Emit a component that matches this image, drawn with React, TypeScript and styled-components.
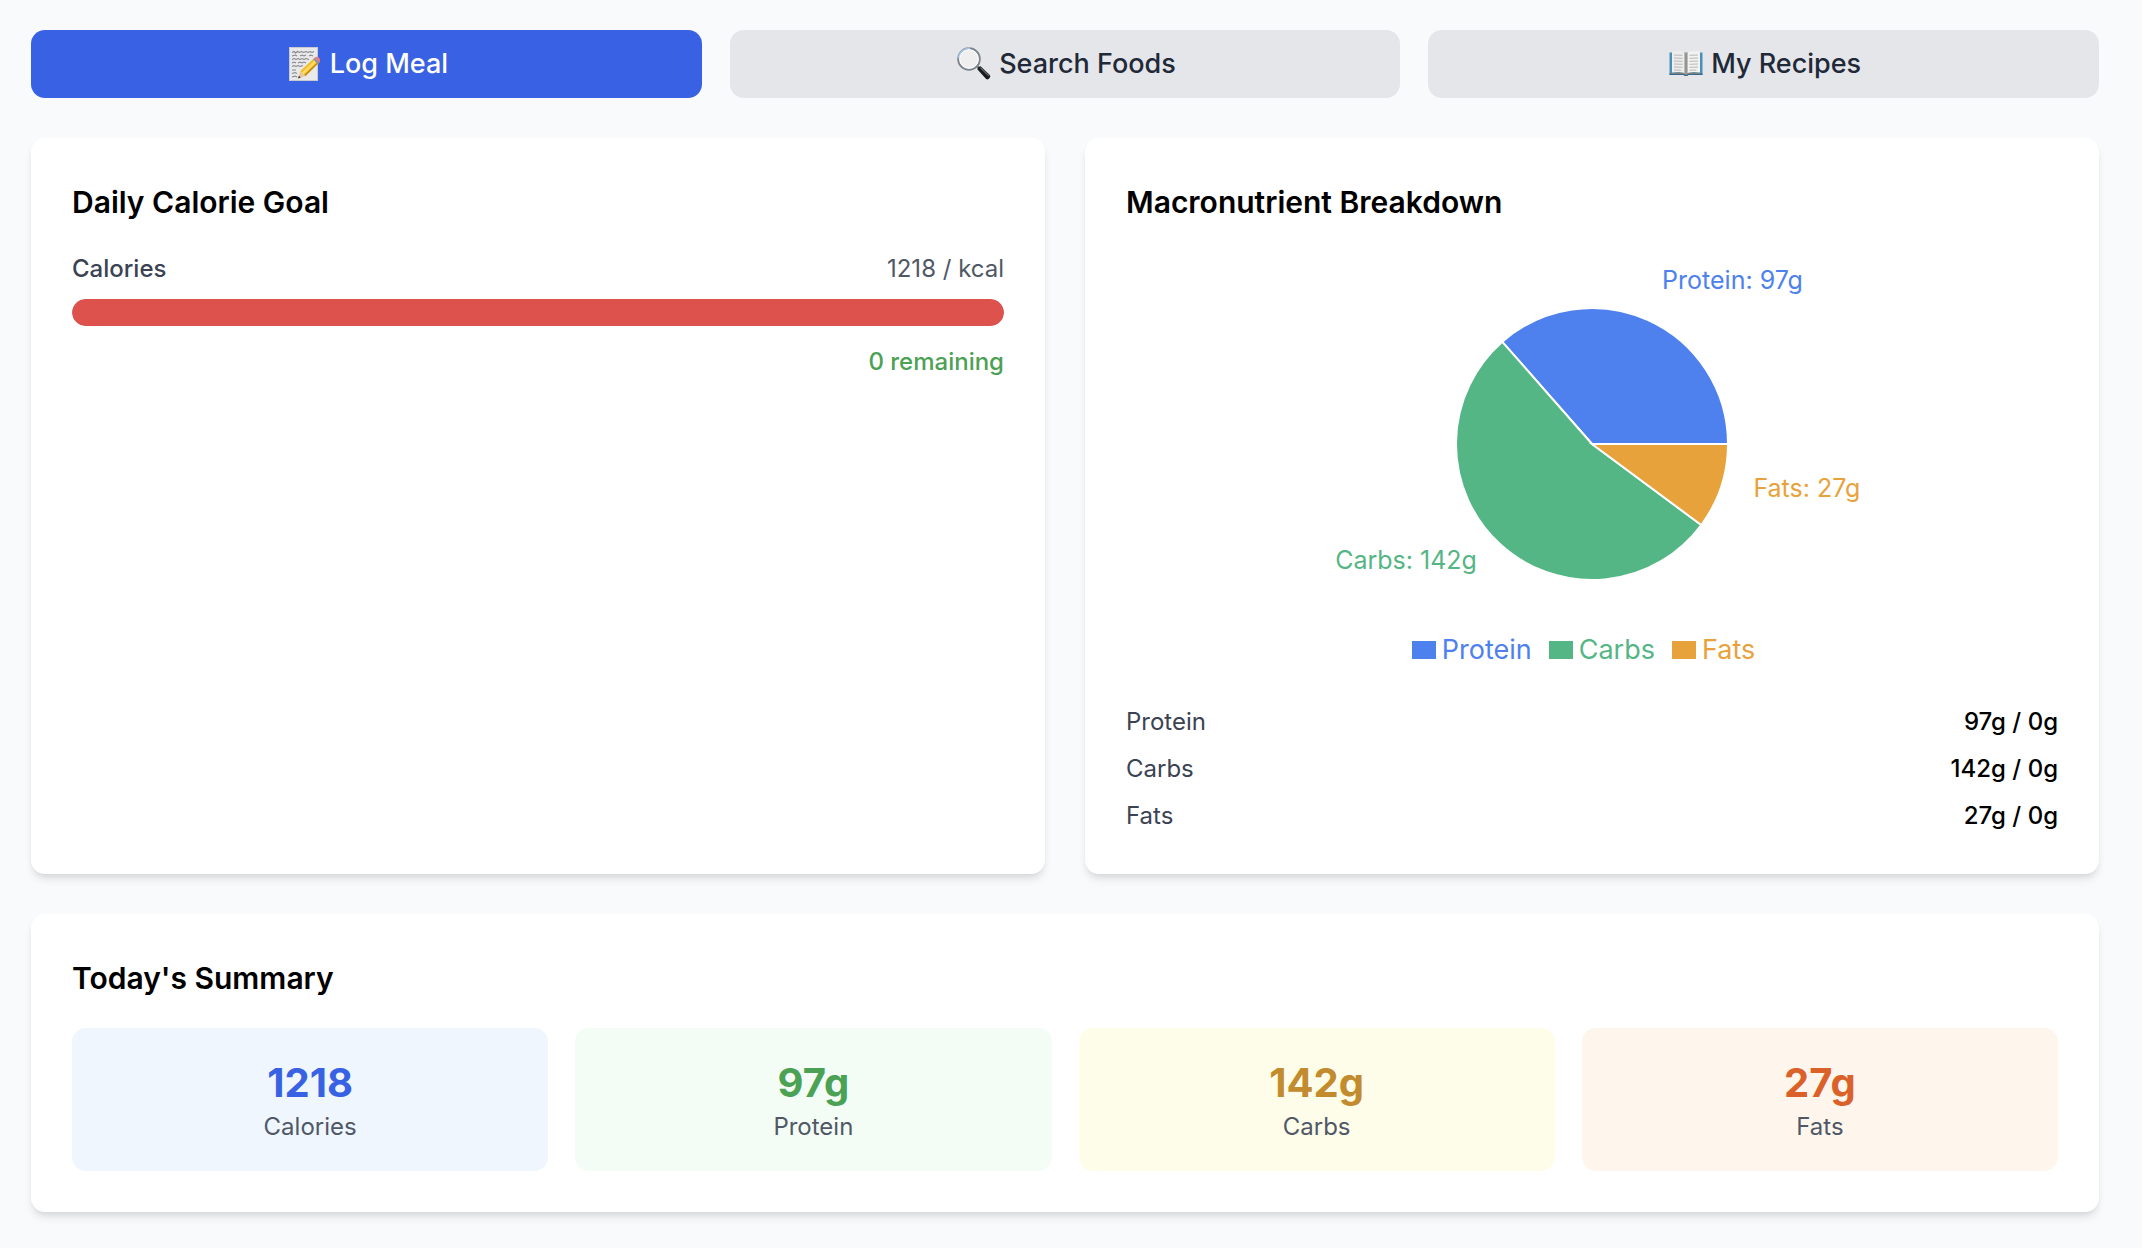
import React, { useState } from "react";
import styled, { createGlobalStyle } from "styled-components";

const GlobalStyle = createGlobalStyle`
  *, *::before, *::after { box-sizing: border-box; }
  body {
    margin: 0;
    background: #f9fafc;
    color: #000;
    font-family: Inter, "Liberation Sans", sans-serif;
    font-size: 24px;
    line-height: 34px;
  }
  h2, dl, dd, dt, p { margin: 0; }
`;

const Page = styled.main`
  display: flex;
  flex-direction: column;
  gap: 40px;
  padding: 30px 43px 36px 31px;
`;

const Tabs = styled.nav`
  display: grid;
  grid-template-columns: repeat(3, 1fr);
  gap: 28px;
`;

const TabButton = styled.button<{ $active: boolean }>`
  display: flex;
  align-items: center;
  justify-content: center;
  gap: 8px;
  padding: 13px 27px;
  border: 0;
  border-radius: 14px;
  background: ${(p) => (p.$active ? "#3862e3" : "#e5e6ea")};
  color: ${(p) => (p.$active ? "#fff" : "#1f2937")};
  font: inherit;
  font-size: 27px;
  font-weight: 500;
  line-height: 42px;
  cursor: pointer;
`;

const TabIcon = styled.svg`
  width: 34px;
  height: 34px;
  margin-left: 3px;
  flex: none;
`;

const Columns = styled.div`
  display: grid;
  grid-template-columns: 1fr 1fr;
  gap: 40px;
`;

const Card = styled.section`
  padding: 41px;
  border-radius: 14px;
  background: #fff;
  box-shadow: 0 7px 10px -2px rgba(0, 0, 0, 0.1), 0 3px 7px -3px rgba(0, 0, 0, 0.1);
`;

const CardTitle = styled.h2`
  margin-bottom: 27px;
  font-size: 30px;
  font-weight: 600;
  line-height: 46px;
`;

const SplitRow = styled.div`
  display: flex;
  justify-content: space-between;
`;

const GoalLabel = styled.span`
  color: #3b4353;
  font-weight: 500;
`;

const GoalValue = styled.span`
  color: #505866;
`;

const Track = styled.div`
  height: 27px;
  margin: 13px 0 19px;
  overflow: hidden;
  border-radius: 14px;
  background: #e5e6ea;
`;

const Fill = styled.div`
  height: 100%;
  border-radius: 14px;
  background: #dd524c;
`;

const Remaining = styled.p`
  color: #4ba154;
  font-weight: 500;
  text-align: right;
`;

const Chart = styled.svg`
  display: block;
  width: 600px;
  max-width: 100%;
  height: 378px;
  margin: 0 auto;
  font-size: 25px;
`;

const Legend = styled.ul`
  display: flex;
  justify-content: center;
  margin: 0 0 35px;
  padding: 0;
  list-style: none;
  font-size: 27px;
  line-height: 40px;
`;

const LegendItem = styled.li<{ $color: string }>`
  display: flex;
  align-items: center;
  gap: 6px;
  margin-right: 17px;
  color: ${(p) => p.$color};

  &::before {
    content: "";
    width: 24px;
    height: 18px;
    background: currentColor;
  }
`;

const MacroList = styled.dl`
  display: flex;
  flex-direction: column;
  gap: 13px;
`;

const MacroName = styled.dt`
  color: #3b4353;
`;

const MacroAmount = styled.dd`
  font-weight: 500;
`;

const StatGrid = styled.dl`
  display: grid;
  grid-template-columns: repeat(4, 1fr);
  gap: 27px;
`;

const Stat = styled.div<{ $background: string }>`
  display: flex;
  flex-direction: column-reverse;
  padding: 27px;
  border-radius: 14px;
  background: ${(p) => p.$background};
  text-align: center;
`;

const StatValue = styled.dd<{ $color: string }>`
  color: ${(p) => p.$color};
  font-size: 40px;
  font-weight: 700;
  line-height: 55px;
`;

const StatName = styled.dt`
  color: #505866;
`;

const MemoIcon = () => (
  <TabIcon viewBox="0 0 34 34" aria-hidden="true">
    <rect x="1" y="0" width="29" height="34" fill="#e9e9ea" />
    <rect x="1.5" y="0.5" width="28" height="33" fill="none" stroke="#c9cacc" />
    <g fill="none" stroke="#85868b" strokeWidth="1.1">
      <path d="M4 5.500l2-1 1.500 1.500 2-1.500 2 1 2-1 2 1 2.500-1 2 1 2-1 2 1 2-1" />
      <path d="M4 9l3-1 2 1M12 9l2-1 2 1 2-1M21 9l2-1 2 1" />
      <path d="M4 12.500l2-1 2 1 2-1 2 1 2-1 2 1 2-1 3 1" />
      <path d="M4 16l2-1 2 1M10 16l2-1 2 1 2-1 2 1" />
      <path d="M4 19.500l2-1 2 1 2-1 2 1 3-1M4 23h4M4 26.500l3-1 2 1M4 30l3-1 2 1" />
    </g>
    <path d="M10 31.500l2.300-7.500 5.200 5z" fill="#e8c99b" />
    <path d="M10 31.500l.9-2.800 1.900 1.900z" fill="#333" />
    <path d="M12.300 24L26 11.300l4.700 4.700-13.200 13z" fill="#f3bd2c" />
    <path d="M14 25.600L27.500 12.800l1.600 1.600L15.700 27.200z" fill="#ffdc66" />
    <path d="M16.300 27.900L29.800 15.100l.9.900-13.200 13z" fill="#c48713" />
    <path d="M25 12.200l1.900-1.800 4.800 4.800-1.900 1.800z" fill="#8d969d" />
    <path d="M26.600 10.700c1.500-1.500 3.300-1 4.500.2s1.700 3 .2 4.500z" fill="#ec7b82" />
  </TabIcon>
);

const SearchIcon = () => (
  <TabIcon viewBox="0 0 34 34" aria-hidden="true">
    <path d="M19.500 20.500l2-2 3 2.700-2 2z" fill="#7e858b" />
    <path d="M20.300 22.300q1-2.500 3.200-3l9.300 8.800q1.200 1.400-.4 3.200t-3.300.6z" fill="#17191b" />
    <path d="M23.400 20.800l8.500 8" stroke="#60666b" strokeWidth="1.300" fill="none" />
    <circle cx="12" cy="12" r="10.800" fill="#efeff0" stroke="#7b848c" strokeWidth="1.900" />
    <path d="M1.500 11A10.700 10.700 0 0 1 13 1.300" fill="none" stroke="#a8c4e4" strokeWidth="1.700" />
    <circle cx="12" cy="12" r="9.300" fill="none" stroke="#fff" strokeWidth="1" />
  </TabIcon>
);

const BookIcon = () => (
  <TabIcon viewBox="0 0 34 34" aria-hidden="true">
    <path d="M.500 5.500h33V28H.500z" fill="#4b8fb9" />
    <path d="M.500 26.500h33V28H.500z" fill="#356b91" />
    <path d="M14 27h6l-1.200 2h-3.600z" fill="#3b7196" />
    <path d="M2.500 25.500h29v1.300H20l-3 1.400-3-1.400H2.500z" fill="#8d8171" />
    <path d="M3 4.500Q12 3 17 5.800V26.500Q12 24 3 25.500z" fill="#ededeb" />
    <path d="M31 4.500Q22 3 17 5.800V26.500Q22 24 31 25.500z" fill="#f2f2f0" />
    <path d="M15.200 5Q16.700 5.300 17 6.200q.3-.9 1.800-1.200v20.700L17 26.800l-1.800-1.100z" fill="#aeb0b0" />
    <path d="M17 6v20.500" stroke="#777a7c" />
    <path
      d="M5 8l8.500.3M5 11l8.500.3M5 14l8.500.3M5 17l8.500.3M5 20l8.500.3M5 23l7 .2M20.500 8.300L29 8M20.500 11.300L29 11M20.500 14.300L29 14M20.500 17.300L29 17M20.500 20.300L29 20M20.500 23.200l7-.2"
      stroke="#b8b8b6"
      fill="none"
    />
  </TabIcon>
);

const tabs = [
  { label: "Log Meal", Icon: MemoIcon },
  { label: "Search Foods", Icon: SearchIcon },
  { label: "My Recipes", Icon: BookIcon },
];

const macros = [
  { name: "Protein", grams: 97, color: "#4e81ee" },
  { name: "Carbs", grams: 142, color: "#55b685" },
  { name: "Fats", grams: 27, color: "#e8a23b" },
];

const stats = [
  { name: "Calories", value: "1218", color: "#3862e3", background: "#eff6fe" },
  { name: "Protein", value: "97g", color: "#4ba154", background: "#f3fdf5" },
  { name: "Carbs", value: "142g", color: "#c28b2e", background: "#fefdea" },
  { name: "Fats", value: "27g", color: "#da622a", background: "#fef6ed" },
];

const RADIUS = 136;
const LABEL_RADIUS = 170;

const point = (angle: number, radius: number) => [
  radius * Math.cos(angle),
  -radius * Math.sin(angle),
];

function MacroPie() {
  const total = macros.reduce((sum, m) => sum + m.grams, 0);
  let start = 0;
  return (
    <Chart viewBox="-300 -192 600 378" role="img" aria-label="Macronutrient breakdown">
      {macros.map((m) => {
        const sweep = (m.grams / total) * Math.PI * 2;
        const [x1, y1] = point(start, RADIUS);
        const [x2, y2] = point(start + sweep, RADIUS);
        const [lx, ly] = point(start + sweep / 2, LABEL_RADIUS);
        start += sweep;
        return (
          <g key={m.name} fill={m.color}>
            <path
              d={`M0 0L${x1} ${y1}A${RADIUS} ${RADIUS} 0 ${sweep > Math.PI ? 1 : 0} 0 ${x2} ${y2}Z`}
              stroke="#fff"
              strokeWidth="2"
            />
            <text x={lx} y={ly} textAnchor={lx > 0 ? "start" : "end"}>
              {`${m.name}: ${m.grams}g`}
            </text>
          </g>
        );
      })}
    </Chart>
  );
}

export default function App() {
  const [active, setActive] = useState("Log Meal");
  const consumed = 1218;
  const goal = 0;
  const percent = goal > 0 ? Math.min(100, (consumed / goal) * 100) : 100;

  return (
    <>
      <GlobalStyle />
      <Page>
        <Tabs>
          {tabs.map(({ label, Icon }) => (
            <TabButton
              key={label}
              type="button"
              $active={active === label}
              aria-pressed={active === label}
              onClick={() => setActive(label)}
            >
              <Icon />
              {label}
            </TabButton>
          ))}
        </Tabs>

        <Columns>
          <Card>
            <CardTitle>Daily Calorie Goal</CardTitle>
            <SplitRow>
              <GoalLabel id="calories-label">Calories</GoalLabel>
              <GoalValue>{consumed} / kcal</GoalValue>
            </SplitRow>
            <Track role="progressbar" aria-labelledby="calories-label" aria-valuenow={percent}>
              <Fill style={{ width: `${percent}%` }} />
            </Track>
            <Remaining>0 remaining</Remaining>
          </Card>

          <Card>
            <CardTitle>Macronutrient Breakdown</CardTitle>
            <MacroPie />
            <Legend>
              {macros.map((m) => (
                <LegendItem key={m.name} $color={m.color}>
                  {m.name}
                </LegendItem>
              ))}
            </Legend>
            <MacroList>
              {macros.map((m) => (
                <SplitRow key={m.name}>
                  <MacroName>{m.name}</MacroName>
                  <MacroAmount>{m.grams}g / 0g</MacroAmount>
                </SplitRow>
              ))}
            </MacroList>
          </Card>
        </Columns>

        <Card>
          <CardTitle>Today's Summary</CardTitle>
          <StatGrid>
            {stats.map((s) => (
              <Stat key={s.name} $background={s.background}>
                <StatName>{s.name}</StatName>
                <StatValue $color={s.color}>{s.value}</StatValue>
              </Stat>
            ))}
          </StatGrid>
        </Card>
      </Page>
    </>
  );
}
